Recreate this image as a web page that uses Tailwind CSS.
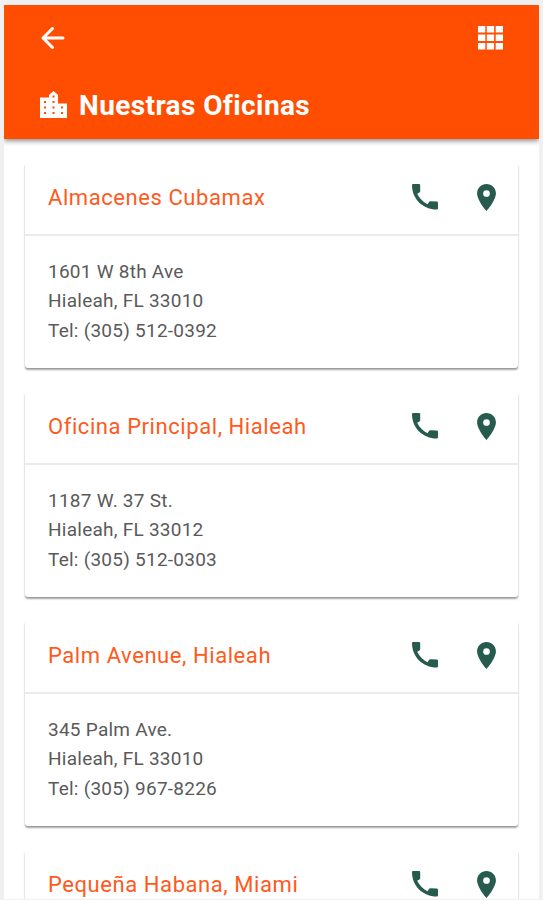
<!DOCTYPE html>
<html lang="es"><head><meta charset="utf-8"><title>Nuestras Oficinas</title>
<script src="https://cdn.jsdelivr.net/npm/@tailwindcss/browser@4"></script></head>
<body class="h-[900px] overflow-hidden bg-[#f0f0f0] font-[Roboto,sans-serif]">
<svg class="hidden"><symbol id="call" viewBox="0 0 26 26"><path d="M1 0h6q1.200 0 1.200 1.200v5.700q0 1-.8 1.500l-2.200 1.300c2.200 4.600 5.700 8.200 10.300 10.500l1.500-2.200q.5-.8 1.500-.7l6.200.3q1.300 0 1.300 1.200v5.500q0 1.200-1.200 1.200C10.600 25.500 0 14.500 0 1.200Q0 0 1 0z"/></symbol>
<symbol id="pin" viewBox="0 0 24 24"><path d="M12 1.500C8 1.500 4.700 4.600 4.700 8.700 4.700 14.300 12 22.500 12 22.500s7.300-8.200 7.300-13.800c0-4.100-3.300-7.200-7.300-7.200zm0 10a2.600 2.600 0 1 1 0-5.200 2.600 2.600 0 0 1 0 5.200z"/></symbol></svg>
<div class="mx-1 mt-[5px] h-[894px] overflow-hidden bg-white">
<header class="relative h-[134px] bg-[#ff4e02] px-[36px] text-white shadow-[0_2px_5px_rgba(0,0,0,0.45)]">
<div class="flex h-[66px] items-center justify-between">
<svg class="-ml-px h-[26px] w-[27px] fill-none stroke-current" viewBox="0 0 27 26" stroke-width="3" stroke-linecap="round" stroke-linejoin="round"><path d="M24 13H4M13.500 3.500L4 13l9.500 9.500"/></svg>
<svg class="h-[24px] w-[25px] fill-current" viewBox="0 0 25 24"><path d="M0 0h7.300v6.500H0zM8.800 0h7.300v6.500H8.800zM17.700 0H25v6.500h-7.300zM0 8.500h7.300V15H0zM8.800 8.500h7.300V15H8.800zM17.700 8.500H25V15h-7.300zM0 17h7.300v6.500H0zM8.800 17h7.300v6.500H8.800zM17.700 17H25v6.500h-7.300z"/></svg>
</div>
<div class="flex h-[68px] items-center gap-[12px]">
<svg class="mt-[-1px] h-[27px] w-[27px] fill-current" viewBox="0 0 27 27"><path fill-rule="evenodd" d="M0 6.500h9V4l4.500-4L18 4v8.500h9V27H0zM4 10v2h2v-2zm0 5.500v2h2v-2zm0 5.500v2h2v-2zm8.500-16.500v2h2v-2zm0 5.500v2h2v-2zm0 5.500v2h2v-2zm0 5.500v2h2v-2zm8.500-5.500v2h2v-2zm0 5.500v2h2v-2z"/></svg>
<h1 class="pt-0.5 text-[28px] font-bold tracking-[0.4px]">Nuestras Oficinas</h1></div>
</header>
<main id="list" class="flex flex-col gap-5 px-[21px] pt-[21px]"></main>
</div>
<script>
const offices=[["Almacenes Cubamax","1601 W 8th Ave","Hialeah, FL 33010","Tel: (305) 512-0392"],["Oficina Principal, Hialeah","1187 W. 37 St.","Hialeah, FL 33012","Tel: (305) 512-0303"],["Palm Avenue, Hialeah","345 Palm Ave.","Hialeah, FL 33010","Tel: (305) 967-8226"],["Pequeña Habana, Miami","","",""]];
document.getElementById('list').innerHTML=offices.map(([n,...l])=>`<article class="h-[209px] shrink-0 pt-[3px] pb-px"><div class="h-[205px] rounded-[3px] bg-white shadow-[0_2px_2px_rgba(0,0,0,0.34),0_1px_1px_rgba(0,0,0,0.1)]"><div class="flex h-[73px] items-center border-b-2 border-[#ebebeb] pb-[3px] pl-[23px] pr-4"><h2 class="grow text-[22px] tracking-[0.570px] text-[#ff5a1c]">${n}</h2><svg class="mr-[33px] size-[26px] fill-[#265b4e]"><use href="#call"/></svg><svg class="size-[31px] fill-[#265b4e]"><use href="#pin"/></svg></div><div class="px-[23px] pt-[21px] text-[19px] leading-[29.3px] tracking-[0.250px] text-[#5a5a5a]">${l.map(x=>`<p>${x}</p>`).join('')}</div></div></article>`).join('');
</script></body></html>
